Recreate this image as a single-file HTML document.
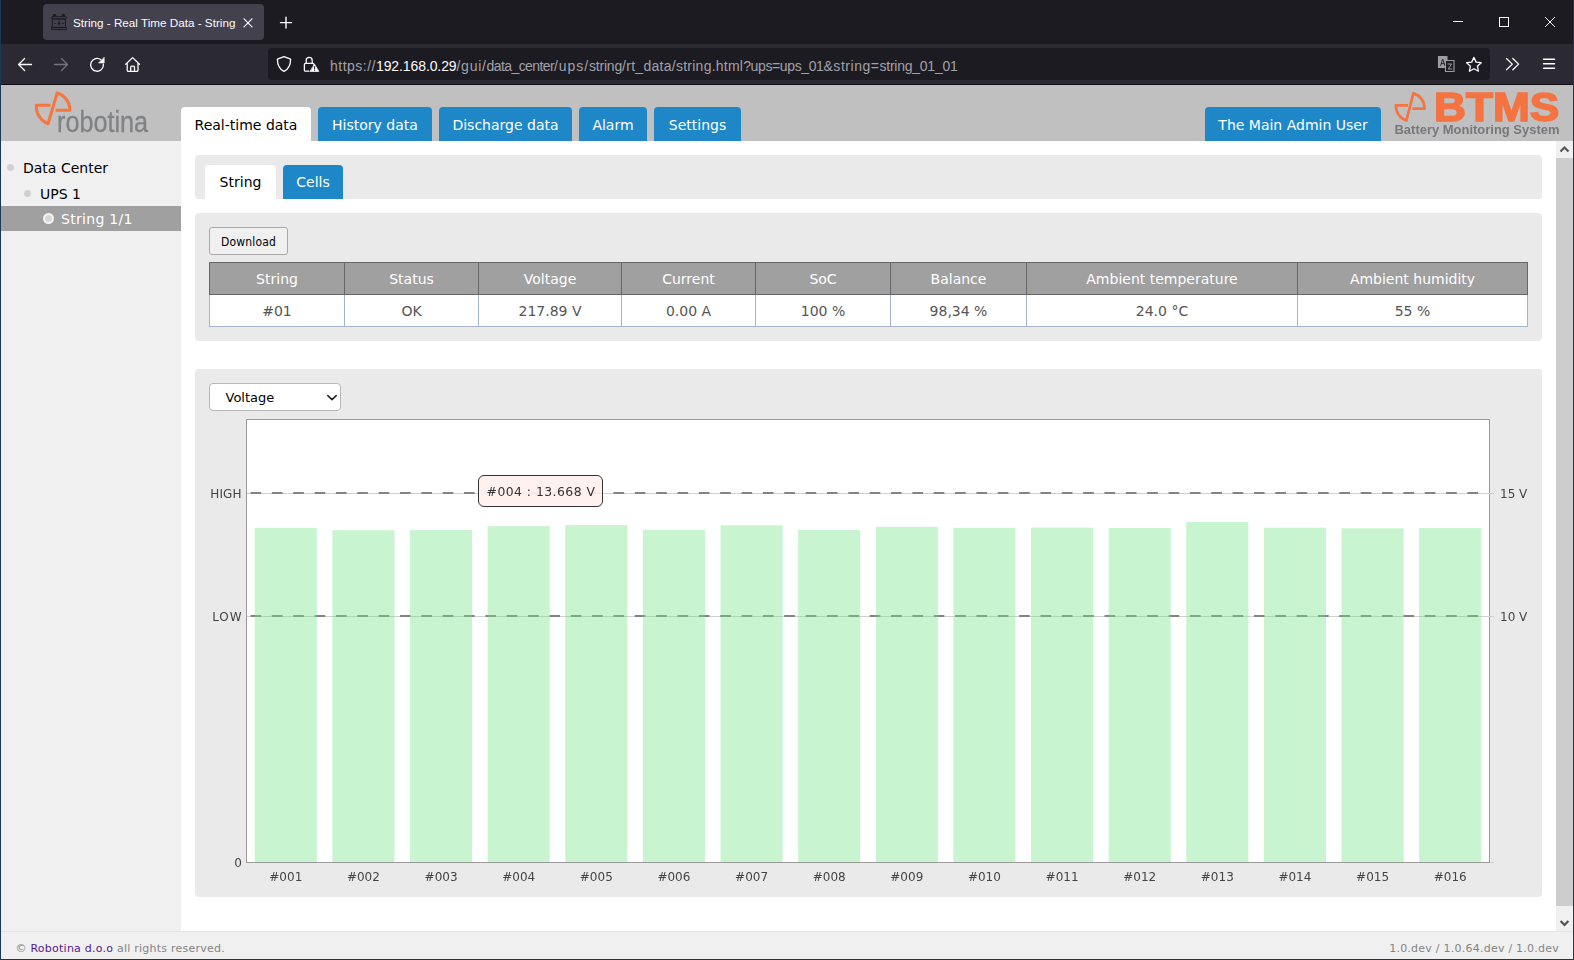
<!DOCTYPE html>
<html lang="en">
<head>
<meta charset="utf-8">
<title>String - Real Time Data - String</title>
<style>
*{box-sizing:border-box;}
html,body{margin:0;padding:0;}
body{width:1574px;height:960px;overflow:hidden;position:relative;background:#fff;
  font-family:"DejaVu Sans","Liberation Sans",sans-serif;font-size:14px;color:#000;}
.abs{position:absolute;}
/* ---------- browser chrome ---------- */
#titlebar{left:0;top:0;width:1574px;height:44px;background:#1c1b22;}
#btab{left:43px;top:4px;width:221px;height:36px;background:#42414d;border-radius:4px;}
#btab .t{left:30px;top:11px;font:11.7px/16px "Liberation Sans",sans-serif;color:#fbfbfe;white-space:nowrap;}
#navbar{left:0;top:44px;width:1574px;height:41px;background:#2b2a33;border-bottom:1px solid #111016;}
#urlbar{left:268px;top:4px;width:1222px;height:32px;background:#1c1b22;border-radius:4px;}
#url{left:62px;top:9px;font:14px/18px "Liberation Sans",sans-serif;color:#a2a1a9;white-space:nowrap;}
#url b{font-weight:normal;color:#fbfbfe;}
.chrome-ui{font-family:"Liberation Sans",sans-serif;color:#fbfbfe;}
/* ---------- page ---------- */
#header{left:1px;top:85px;width:1572px;height:56px;background:#c0c0c0;}
.tab{position:absolute;top:107px;height:34px;border-radius:4px 4px 0 0;background:#1e87c8;color:#fff;
  font-size:14px;line-height:36px;text-align:center;white-space:nowrap;}
.tab.on{background:#fff;color:#000;}
#sidebar{left:1px;top:141px;width:180px;height:791px;background:#f0f0f0;}
.tree{position:absolute;white-space:nowrap;font-size:14px;line-height:18px;color:#000;}
.dot{position:absolute;border-radius:50%;background:#d0d0d0;}
#sel{left:1px;top:206px;width:180px;height:25px;background:#a0a0a0;}
.panel{position:absolute;left:195px;width:1347px;background:#eaeaea;border-radius:4px;}
.stab{position:absolute;top:165px;height:34px;border-radius:4px 4px 0 0;background:#1e87c8;color:#fff;
  font-size:14px;line-height:34px;text-align:center;}
.stab.on{background:#fff;color:#000;}
#dl{left:209px;top:227px;width:79px;height:28px;border:1px solid #a8a8a8;border-radius:3px;background:#f0f0f0;
  font:12px/28px "DejaVu Sans Condensed","DejaVu Sans","Liberation Sans",sans-serif;font-stretch:condensed;letter-spacing:0.15px;color:#000;text-align:center;}
table#t{position:absolute;left:209px;top:262px;width:1318px;border-collapse:collapse;table-layout:fixed;font-size:14px;}
#t th{background:#a0a0a0;color:#fff;font-weight:normal;border:1px solid #666;height:32px;padding:0;text-align:center;}
#t td{background:#fff;color:#555;border:1px solid #a4b4cc;height:32px;padding:0;text-align:center;}
#selbox{left:209px;top:383px;width:132px;height:28px;border:1px solid #b8b8b8;border-radius:4px;background:#fff;
  font-size:13px;line-height:28px;color:#000;padding-left:15.500px;}
#footer{left:1px;top:931px;width:1572px;height:28px;border-top:1px solid #e4e4e4;background:#f0f0f0;font-size:11px;line-height:14px;color:#858585;letter-spacing:0.24px;}
#footer a{color:#551a8b;text-decoration:none;}
/* scrollbar */
#sb{left:1556px;top:141px;width:17px;height:791px;background:#f0f0f0;}
#sbthumb{left:0;top:17px;width:17px;height:748px;background:#cdcdcd;}
/* window border */
.wb{background:#1b3954;}
</style>
</head>
<body>

<!-- browser chrome -->
<div id="titlebar" class="abs">
  <div id="btab" class="abs"><div class="t abs">String - Real Time Data - String</div></div>
</div>
<div id="navbar" class="abs">
  <div id="urlbar" class="abs"><div id="url" class="abs"><span class="abs" style="left:0.0px;letter-spacing:0.496px;">https://</span><b class="abs" style="left:46.0px;letter-spacing:-0.104px;">192.168.0.29</b><span class="abs" style="left:126.5px;letter-spacing:0.726px;">/gui/</span><span class="abs" style="left:156.6px;letter-spacing:-0.596px;">data_center</span><span class="abs" style="left:224.0px;letter-spacing:0.928px;">/ups/</span><span class="abs" style="left:259.0px;letter-spacing:-0.206px;">string</span><span class="abs" style="left:292.0px;letter-spacing:0.292px;">/rt_data/</span><span class="abs" style="left:346.0px;letter-spacing:0.238px;">string.html</span><span class="abs" style="left:413.2px;letter-spacing:-0.379px;">?ups=ups_01</span><span class="abs" style="left:493.5px;letter-spacing:0.531px;">&amp;string=</span><span class="abs" style="left:549.5px;letter-spacing:-0.246px;">string_01_01</span></div></div>
</div>

<svg id="chromeicons" class="abs" style="left:0;top:0;" width="1574" height="85" viewBox="0 0 1574 85" fill="none" stroke="#fbfbfe" stroke-width="1.3" stroke-linecap="round" stroke-linejoin="round">
<!-- favicon battery -->
<g stroke="#1d1c24" stroke-width="1" fill="none">
<rect x="53.4" y="14.5" width="2.4" height="1.6" rx="0.6" fill="#1d1c24"/>
<rect x="62.2" y="14.5" width="2.4" height="1.6" rx="0.6" fill="#1d1c24"/>
<rect x="51.5" y="16.6" width="15" height="2.2" rx="1.1"/>
<rect x="52.6" y="19" width="12.8" height="8.400"/>
<rect x="51.500" y="27.700" width="15" height="1.900" rx="0.3"/>
<path d="M59.500 21.200L57.800 23.700L59.400 23.500L58.500 25.800L60.400 23.100L58.800 23.300Z" fill="#1d1c24" stroke-width="0.6"/>
<path d="M54.300 23.400h1.200M62.500 23.400h1.200" stroke-width="0.9"/>
</g>
<!-- tab close -->
<path d="M244 18.8l8 8M252 18.8l-8 8" stroke-width="1.2"/>
<!-- new tab plus -->
<path d="M280.5 22.6h11M286 17.1v11" stroke-width="1.4"/>
<!-- window controls -->
<path d="M1453 21.5h10" stroke-width="1" stroke-linecap="butt"/>
<rect x="1499.5" y="17.5" width="9" height="9" stroke-width="1" stroke-linejoin="miter"/>
<path d="M1545 17l10 10M1555 17l-10 10" stroke-width="1" stroke-linecap="butt"/>
<!-- back -->
<path d="M31.5 64.5H18.6M24.6 58.5l-6 6 6 6"/>
<!-- forward (disabled) -->
<path d="M54.5 64.5h13M61.5 58.5l6 6-6 6" stroke="#75747d"/>
<!-- reload -->
<path d="M103.4 64.2a6.4 6.4 0 1 1-2.4-4.4"/>
<path d="M104.2 57.6v5.4h-5.4z" fill="#fbfbfe" stroke-width="0.6"/>
<!-- home -->
<path d="M125.7 64.3l6.900-6.700 6.900 6.700"/>
<path d="M127.200 63.600v6.500a1.200 1.200 0 0 0 1.200 1.200h8.400a1.200 1.200 0 0 0 1.200-1.200v-6.500"/>
<path d="M130.700 71.100v-3.900a1.000 1.000 0 0 1 1.000-1.000h1.800a1.000 1.000 0 0 1 1.000 1.000v3.900"/>
<!-- shield -->
<path d="M284 56.6l6.6 2.6c0 5.6-1.8 9.8-6.6 12.2c-4.8-2.4-6.600-6.600-6.600-12.2z"/>
<!-- lock -->
<path d="M306.200 63.400v-3.000a3.000 3.000 0 0 1 6.000 0v3.000"/>
<path d="M309.000 71.200h-3.600a1.000 1.000 0 0 1-1.000-1.000v-5.800a1.000 1.000 0 0 1 1.000-1.000h7.600a1.000 1.000 0 0 1 1.000 1.000v0.800"/>
<path d="M314.600 64.400l4.200 7.000h-8.400z" fill="#fbfbfe" stroke-width="0.8"/>
<path d="M314.600 66.600v2.400M314.600 70.200v0.200" stroke="#1c1b22" stroke-width="1"/>
<!-- translate -->
<g stroke="#9e9da6" stroke-width="1.1">
<rect x="1438.500" y="56.500" width="8.500" height="11.000" fill="#9e9da6"/>
<rect x="1445.500" y="60.500" width="8.500" height="11.000" fill="#1c1b22"/>
<path d="M1440.600 65.500l2.100-6.500 2.100 6.500M1441.400 63.600h2.800" stroke="#2b2a33" stroke-width="1"/>
<path d="M1448.000 64.000h3.600l-3.400 5.000h3.600" stroke-width="1"/>
</g>
<!-- star -->
<path d="M1473.900 57.400l2.200 4.700 5.100 0.600-3.800 3.500 1.000 5.000-4.500-2.500-4.500 2.500 1.000-5.000-3.800-3.500 5.100-0.600z"/>
<!-- overflow chevrons -->
<path d="M1506.500 58.500l5.800 5.600-5.800 5.600M1512.800 58.500l5.800 5.600-5.800 5.600"/>
<!-- hamburger -->
<path d="M1543.500 59.200h11M1543.500 63.700h11M1543.500 68.200h11" stroke-width="1.4"/>
</svg>

<!-- page header -->
<div id="header" class="abs"></div>
<div class="tab on" style="left:181px;width:130px;">Real-time data</div>
<div class="tab" style="left:318px;width:114px;">History data</div>
<div class="tab" style="left:439px;width:133px;">Discharge data</div>
<div class="tab" style="left:579px;width:68px;">Alarm</div>
<div class="tab" style="left:654px;width:87px;">Settings</div>
<div class="tab" style="left:1205px;width:176px;">The Main Admin User</div>

<!-- logos -->
<svg id="logos" class="abs" style="left:0;top:85px;will-change:transform;" width="1574" height="56" viewBox="0 85 1574 56">
<path d="M55.7 110.3H69.9A18 18 0 0 0 57.2 92.9L48.100 123.700A18.200 18.200 0 0 1 36.400 105.300H50.500" fill="none" stroke="#f5763f" stroke-width="3.1" stroke-linejoin="round"/>
<text x="57" y="132" font-family="'Liberation Sans',sans-serif" font-size="30" fill="#808285" stroke="#808285" stroke-width="0.35" textLength="91" lengthAdjust="spacingAndGlyphs">robotina</text>
<path d="M1412.4 108.6H1424.4A15 15 0 0 0 1413.4 93.4L1406.4 120.4A15 15 0 0 1 1396 105.4H1408" fill="none" stroke="#f47340" stroke-width="2.7" stroke-linejoin="miter"/>
<text x="1434" y="121" font-family="'Liberation Sans',sans-serif" font-weight="bold" font-size="40" fill="#f47340" stroke="#f47340" stroke-width="1.6" textLength="125.300" lengthAdjust="spacingAndGlyphs">BTMS</text>
<text x="1394.5" y="134" font-family="'Liberation Sans',sans-serif" font-weight="bold" font-size="13" fill="#77787b" textLength="165" lengthAdjust="spacingAndGlyphs">Battery Monitoring System</text>
</svg>

<!-- sidebar -->
<div id="sidebar" class="abs"></div>
<div id="sel" class="abs"></div>
<div class="dot" style="left:7px;top:164px;width:7px;height:7px;"></div>
<div class="tree" style="left:23px;top:159px;">Data Center</div>
<div class="dot" style="left:24px;top:190px;width:7px;height:7px;"></div>
<div class="tree" style="left:40px;top:185px;">UPS 1</div>
<div class="dot" style="left:43px;top:213px;width:11px;height:11px;background:#d8d8d8;border:2px solid #f4f4f4;"></div>
<div class="tree" style="left:61px;top:210px;color:#fff;letter-spacing:0.3px;">String 1/1</div>

<!-- panels -->
<div class="panel" style="top:155px;height:44px;"></div>
<div class="stab on" style="left:205px;width:71px;">String</div>
<div class="stab" style="left:283px;width:60px;">Cells</div>

<div class="panel" style="top:213px;height:128px;"></div>
<div id="dl" class="abs">Download</div>
<table id="t">
<colgroup><col style="width:135px"><col style="width:134px"><col style="width:143px"><col style="width:134px"><col style="width:135px"><col style="width:136px"><col style="width:271px"><col style="width:230px"></colgroup>
<tr><th>String</th><th>Status</th><th>Voltage</th><th>Current</th><th>SoC</th><th>Balance</th><th>Ambient temperature</th><th>Ambient humidity</th></tr>
<tr><td>#01</td><td>OK</td><td>217.89 V</td><td>0.00 A</td><td>100 %</td><td>98,34 %</td><td>24.0 °C</td><td>55 %</td></tr>
</table>

<div class="panel" style="top:369px;height:528px;"></div>
<div id="selbox" class="abs">Voltage<svg class="abs" style="left:116px;top:10px;" width="12" height="8" viewBox="0 0 12 8"><path d="M1.8 1.6L6 5.6L10.2 1.6" fill="none" stroke="#222" stroke-width="1.5" stroke-linecap="round" stroke-linejoin="round"/></svg></div>

<!-- chart placeholder -->
<svg id="chart" class="abs" style="left:195px;top:411px;will-change:transform;" width="1347" height="486" viewBox="195 411 1347 486" font-family="'DejaVu Sans','Liberation Sans',sans-serif" font-size="12" fill="#444">
<rect x="246.5" y="419.5" width="1243" height="443" fill="#fff" stroke="#9a9a9a" stroke-width="1"/>
<line x1="247" y1="493.5" x2="1494" y2="493.5" stroke="#d0d0d0" stroke-width="1"/>
<line x1="247" y1="616.5" x2="1494" y2="616.5" stroke="#d0d0d0" stroke-width="1"/>
<line x1="1490" y1="862.5" x2="1494" y2="862.5" stroke="#d0d0d0" stroke-width="1"/>
<line x1="250.500" y1="493" x2="1480" y2="493" stroke="#878383" stroke-width="2" stroke-dasharray="10.67 10.68"/>
<line x1="250.500" y1="616" x2="1480" y2="616" stroke="#878383" stroke-width="2" stroke-dasharray="10.67 10.68"/>
<rect x="254.76" y="527.8" width="62.10" height="334.2" fill="rgba(112,226,132,0.385)"/>
<rect x="332.39" y="530.2" width="62.10" height="331.8" fill="rgba(112,226,132,0.385)"/>
<rect x="410.01" y="530.0" width="62.10" height="332.0" fill="rgba(112,226,132,0.385)"/>
<rect x="487.64" y="526.1" width="62.10" height="335.9" fill="rgba(112,226,132,0.385)"/>
<rect x="565.26" y="525.0" width="62.10" height="337.0" fill="rgba(112,226,132,0.385)"/>
<rect x="642.89" y="529.8" width="62.10" height="332.2" fill="rgba(112,226,132,0.385)"/>
<rect x="720.51" y="525.4" width="62.10" height="336.6" fill="rgba(112,226,132,0.385)"/>
<rect x="798.14" y="530.0" width="62.10" height="332.0" fill="rgba(112,226,132,0.385)"/>
<rect x="875.76" y="526.8" width="62.10" height="335.2" fill="rgba(112,226,132,0.385)"/>
<rect x="953.39" y="527.8" width="62.10" height="334.2" fill="rgba(112,226,132,0.385)"/>
<rect x="1031.01" y="527.6" width="62.10" height="334.4" fill="rgba(112,226,132,0.385)"/>
<rect x="1108.64" y="528.0" width="62.10" height="334.0" fill="rgba(112,226,132,0.385)"/>
<rect x="1186.26" y="522.0" width="62.10" height="340.0" fill="rgba(112,226,132,0.385)"/>
<rect x="1263.89" y="527.7" width="62.10" height="334.3" fill="rgba(112,226,132,0.385)"/>
<rect x="1341.51" y="528.3" width="62.10" height="333.7" fill="rgba(112,226,132,0.385)"/>
<rect x="1419.14" y="528.1" width="62.10" height="333.9" fill="rgba(112,226,132,0.385)"/>
<text x="285.8" y="881" text-anchor="middle">#001</text>
<text x="363.4" y="881" text-anchor="middle">#002</text>
<text x="441.1" y="881" text-anchor="middle">#003</text>
<text x="518.7" y="881" text-anchor="middle">#004</text>
<text x="596.3" y="881" text-anchor="middle">#005</text>
<text x="673.9" y="881" text-anchor="middle">#006</text>
<text x="751.6" y="881" text-anchor="middle">#007</text>
<text x="829.2" y="881" text-anchor="middle">#008</text>
<text x="906.8" y="881" text-anchor="middle">#009</text>
<text x="984.4" y="881" text-anchor="middle">#010</text>
<text x="1062.1" y="881" text-anchor="middle">#011</text>
<text x="1139.7" y="881" text-anchor="middle">#012</text>
<text x="1217.3" y="881" text-anchor="middle">#013</text>
<text x="1294.9" y="881" text-anchor="middle">#014</text>
<text x="1372.6" y="881" text-anchor="middle">#015</text>
<text x="1450.2" y="881" text-anchor="middle">#016</text>
<text x="210.3" y="498" textLength="31.2" lengthAdjust="spacing">HIGH</text>
<text x="212.2" y="621" textLength="29.3" lengthAdjust="spacing">LOW</text>
<text x="242" y="867" text-anchor="end">0</text>
<text x="1500" y="498">15 V</text>
<text x="1500" y="621">10 V</text>
<rect x="478.5" y="475.5" width="124" height="31" rx="5.5" ry="5.5" fill="rgba(255,240,238,0.93)" stroke="#333" stroke-width="1"/>
<text x="486.600" y="495.500" font-size="12.400" fill="#333" textLength="108.300" lengthAdjust="spacing">#004 : 13.668 V</text>
</svg>

<!-- scrollbar -->
<div id="sb" class="abs"><div id="sbthumb" class="abs"></div>
<svg class="abs" style="left:0;top:0;" width="17" height="791" viewBox="0 0 17 791"><path d="M4.500 10.500L8.500 6.500L12.500 10.500" fill="none" stroke="#505050" stroke-width="2.100"/><path d="M4.600 780.000L8.500 784.000L12.400 780.000" fill="none" stroke="#505050" stroke-width="2.100"/></svg></div>

<!-- footer -->
<div id="footer" class="abs">
  <div class="abs" style="left:14.500px;top:10px;white-space:nowrap;">© <a>Robotina d.o.o</a> all rights reserved.</div>
  <div class="abs" style="right:14px;top:10px;white-space:nowrap;">1.0.dev / 1.0.64.dev / 1.0.dev</div>
</div>

<!-- window border -->
<div class="abs wb" style="left:0;top:0;width:1px;height:960px;"></div>
<div class="abs wb" style="left:1573px;top:0;width:1px;height:960px;"></div>
<div class="abs wb" style="left:0;top:959px;width:1574px;height:1px;"></div>
</body>
</html>
